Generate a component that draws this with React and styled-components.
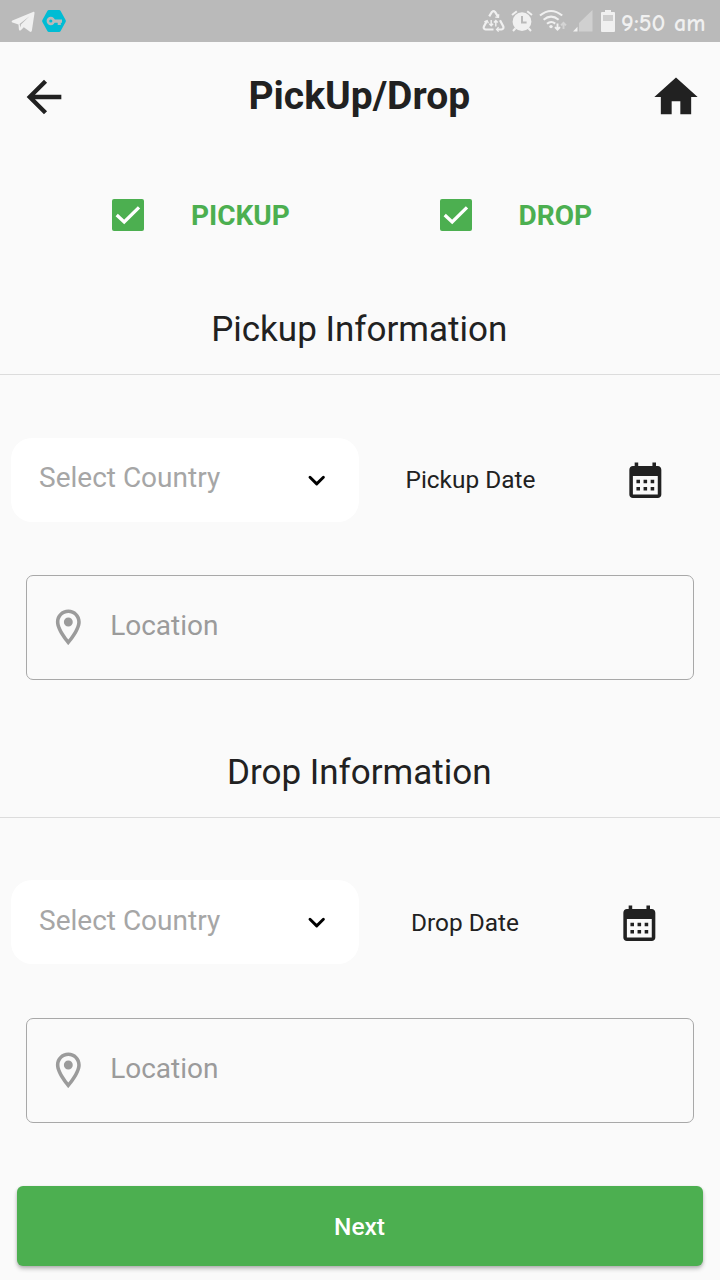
import React from 'react';
import styled, { createGlobalStyle } from 'styled-components';

const GlobalStyle = createGlobalStyle`
  * { box-sizing: border-box; }
  body { margin: 0; background: #fafafa; font-family: Roboto, sans-serif; color: #212121; }
`;

const Screen = styled.main`
  width: 720px;
  height: 1280px;
  overflow: hidden;
  display: flex;
  flex-direction: column;
  background: #fafafa;
`;

const StatusBar = styled.div`
  height: 42px;
  flex: none;
  display: flex;
  align-items: center;
  justify-content: space-between;
  background: #bababa;
  padding: 0 13px 0 11px;
`;

const StatusGroup = styled.div`
  display: flex;
  align-items: center;
  gap: ${(p) => p.$gap}px;
  svg { display: block; flex: none; }
`;

const Clock = styled.span`
  width: 86px;
  color: #f0f0f0;
  font: 700 24.2px/42px "Comic Neue", "Comic Sans MS", cursive, Lato, sans-serif;
  white-space: nowrap;
  padding-top: 3px;
`;

const Header = styled.header`
  height: 108px;
  flex: none;
  display: flex;
  align-items: center;
  justify-content: space-between;
  padding: 1px 18px 0 17.5px;
  svg { display: block; }
`;

const Title = styled.h1`
  margin: 0;
  padding: 0 1px 1px 0;
  font-size: 39px;
  font-weight: 700;
  line-height: 46px;
`;

const Options = styled.div`
  height: 130px;
  flex: none;
  display: flex;
  padding-left: 112px;
`;

const Option = styled.div`
  width: ${(p) => p.$width}px;
  height: 130px;
  display: flex;
  align-items: center;
  gap: 47px;
  color: #4caf50;
  font-size: 28px;
  font-weight: 700;
  svg { display: block; }
`;

const Section = styled.section`
  height: 443px;
  flex: none;
  display: flex;
  flex-direction: column;
`;

const SectionTitle = styled.h2`
  margin: 0;
  height: 95px;
  flex: none;
  display: flex;
  align-items: center;
  justify-content: center;
  border-bottom: 1px solid #dcdcdc;
  font-size: 35px;
  font-weight: 400;
  padding: 4px 1.5px 0 0;
`;

const FieldRow = styled.div`
  display: flex;
  align-items: center;
  margin: ${(p) => p.$top}px 0 ${(p) => 116 - p.$top}px;
  padding-left: 11px;
  height: 84px;
`;

const Select = styled.div`
  width: 348px;
  height: 84px;
  flex: none;
  display: flex;
  align-items: center;
  justify-content: space-between;
  padding: 0 32px 0 28px;
  border-radius: 21px;
  background: #fff;
  color: #a6a6a6;
  font-size: 28px;
  svg { display: block; }
`;

const SelectLabel = styled.span`
  padding-bottom: ${(p) => p.$lift}px;
`;

const DateField = styled.div`
  flex: 1;
  display: flex;
  align-items: center;
  justify-content: space-between;
  padding: ${(p) => p.$drop}px ${(p) => p.$right}px 0 ${(p) => p.$left}px;
  font-size: 24.4px;
  svg { display: block; }
`;

const DateLabel = styled.span`
  padding-bottom: 2px;
`;

const LocationField = styled.div`
  height: 104.6px;
  flex: none;
  margin: 0 26px 0 25.5px;
  display: flex;
  align-items: center;
  gap: 21px;
  padding: 0 0 0 20px;
  border: 1px solid #a8a8a8;
  border-radius: 7px;
  color: #9b9b9b;
  font-size: 28px;
  svg { display: block; }
`;

const LocationLabel = styled.span`
  padding-bottom: 3.6px;
`;

const NextButton = styled.button`
  height: 80.4px;
  flex: none;
  margin: 20px 17px 0;
  padding: 0 1px 0 0;
  border: 0;
  border-radius: 6px;
  background: #4caf50;
  color: #fff;
  font: 500 24.5px Roboto, sans-serif;
  box-shadow: 0 3px 4px rgba(0, 0, 0, 0.22), 0 1px 3px rgba(0, 0, 0, 0.12);
`;

const MaterialIcon = ({ size, d, color = '#212121' }) => (
  <svg width={size} height={size} viewBox="0 0 24 24" fill={color}><path d={d} /></svg>
);

const ARROW = 'M20 11H7.83l5.59-5.59L12 4l-8 8 8 8 1.41-1.41L7.83 13H20v-2z';
const HOME = 'M10 20v-6h4v6h5v-8h3L12 3 2 12h3v8z';
const CALENDAR = 'M19 4h-1V2h-2v2H8V2H6v2H5c-1.11 0-1.99.9-1.99 2L3 20c0 1.1.89 2 2 2h14c1.1 0 2-.9 2-2V6c0-1.1-.9-2-2-2zm0 16H5V9.5h14V20zM9 13.7H7v-2h2v2zm4 0h-2v-2h2v2zm4 0h-2v-2h2v2zm-8 4H7v-2h2v2zm4 0h-2v-2h2v2zm4 0h-2v-2h2v2z';
const PIN = 'M12 2C8.13 2 5 5.13 5 9c0 5.25 7 13 7 13s7-7.75 7-13c0-3.87-3.13-7-7-7zM7 9c0-2.76 2.24-5 5-5s5 2.24 5 5c0 2.88-2.88 7.19-5 9.88C9.92 16.21 7 11.85 7 9zM12 6.5a2.5 2.5 0 1 0 0 5 2.5 2.5 0 0 0 0-5z';

const Checkbox = () => (
  <svg width="32" height="32" viewBox="0 0 32 32">
    <rect width="32" height="32" rx="2" fill="#4caf50" />
    <path d="M4.7 16 12.2 23 27 8.4" fill="none" stroke="#fff" strokeWidth="3.3" />
  </svg>
);

const Chevron = () => (
  <svg width="20" height="16" viewBox="0 0 20 16">
    <path d="M3 5.3 9.7 11.9 16.4 5.3" fill="none" stroke="#000" strokeWidth="2.9" strokeLinecap="round" strokeLinejoin="round" />
  </svg>
);

const Telegram = () => (
  <svg width="25" height="22" viewBox="0 0 25 22" fill="#f0f0f0">
    <path d="M1.4 10.4 22 1.9c1.1-.5 1.7.1 1.5 1.3L20.9 20.6c-.3 1.4-1.2 1.6-2.2.9l-5.9-4.2-3 2.9c-.9.8-1.6.4-1.9-.6l-.4-5.1-6-1.9C.4 12.2.4 10.9 1.4 10.4zM8.6 13.9l.8 3.6.6-2.9 8.4-8.4z" />
  </svg>
);

const KeyBadge = () => (
  <svg width="26" height="24" viewBox="0 0 26 24">
    <path d="M7.8 1h10.4c.6 0 1 .3 1.3.8l5.1 9.2c.4.7.4 1.3 0 2l-5.1 9.2c-.3.5-.7.8-1.3.8H7.8c-.6 0-1-.3-1.3-.8L1.4 13c-.4-.7-.4-1.3 0-2l5.1-9.2c.3-.5.7-.8 1.3-.8z" fill="#00bcd4" />
    <circle cx="9.8" cy="12" r="2.9" fill="none" stroke="#bababa" strokeWidth="2.6" />
    <path d="M13 10.5h8v3.2h-1.2v2.2h-3.1v-2.2H13z" fill="#bababa" />
  </svg>
);

const Recycle = () => (
  <svg width="24" height="24" viewBox="0 0 24 24" fill="none" stroke="#f0f0f0" strokeWidth="2.2">
    <path d="M8.2 7.4 10.9 3q1.6-1.6 3.2 0l3 4.8M19 11.2l3.3 6.3q.6 2.6-1.8 3h-4.3M12.5 20.5H4.7q-2.6-.5-1.8-3l3-5.6" />
    <path d="m17.7 5.2-.2 3.2-3.2-.3M17.6 18.2l-2 2.3 2 2.1M3.3 12.8l2.9-1.2 1.2 2.6" strokeWidth="1.3" />
    <path d="M10.2 11v5.8m-1.9-2 1.9 2 1.9-2M14.8 17.6v-6m-1.9 2 1.9-2 1.9 2" strokeWidth="1.4" />
  </svg>
);

const Alarm = () => (
  <svg width="22" height="22" viewBox="0 0 22 22">
    <circle cx="11" cy="11.7" r="9.4" fill="#f0f0f0" />
    <path d="M1 5 5.8 1.2M21 5l-4.8-3.8M4.5 18.3 2 21m15.5-2.7L20 21" stroke="#f0f0f0" strokeWidth="2" />
    <path d="M11 6v6.4h4.6" fill="none" stroke="#bababa" strokeWidth="2" />
  </svg>
);

const Wifi = () => (
  <svg width="28" height="24" viewBox="0 0 28 24" fill="none" stroke="#f0f0f0" strokeWidth="2.1">
    <path d="M1 6.5q11-9 22.2 0M4.6 10.7q7.5-6 15 0M8 14.8q4.1-3.5 8.2-.2" />
    <circle cx="12" cy="17.6" r="1.7" fill="#f0f0f0" stroke="none" />
    <path d="M18.5 14.5v6m-2.5-2.4 2.5 2.6 2.5-2.6" strokeWidth="1.9" />
    <path d="M24.5 20v-6m-2.5 2.4 2.5-2.6 2.5 2.6" stroke="#d4d4d4" strokeWidth="1.9" />
  </svg>
);

const Signal = () => (
  <svg width="22" height="22" viewBox="0 0 22 22">
    <path d="M19.5 0v21.5H6V13z" fill="#d0d0d0" />
    <path d="M4.5 16.8v4.7H0z" fill="#f0f0f0" />
  </svg>
);

const Battery = () => (
  <svg width="14" height="22" viewBox="0 0 14 22">
    <path d="M4 0h6v2h3q1 0 1 1v18q0 1-1 1H1q-1 0-1-1V3q0-1 1-1h3z" fill="#f0f0f0" />
    <path d="M2 5h10v6H2z" fill="#cecece" />
  </svg>
);

const InfoSection = ({ kind, top, left, right, drop, lift }) => (
  <Section>
    <SectionTitle>{kind} Information</SectionTitle>
    <FieldRow $top={top}>
      <Select><SelectLabel $lift={lift}>Select Country</SelectLabel><Chevron /></Select>
      <DateField $left={left} $right={right} $drop={drop}>
        <DateLabel>{kind} Date</DateLabel>
        <MaterialIcon size={42.67} d={CALENDAR} />
      </DateField>
    </FieldRow>
    <LocationField>
      <MaterialIcon size={42.67} d={PIN} color="#9b9b9b" />
      <LocationLabel>Location</LocationLabel>
    </LocationField>
  </Section>
);

export default function App() {
  return (
    <>
      <GlobalStyle />
      <Screen>
        <StatusBar>
          <StatusGroup $gap={5}><Telegram /><KeyBadge /></StatusGroup>
          <StatusGroup $gap={6}>
            <Recycle /><Alarm /><Wifi /><Signal /><Battery />
            <Clock>9:50 am</Clock>
          </StatusGroup>
        </StatusBar>
        <Header>
          <MaterialIcon size={52} d={ARROW} />
          <Title>PickUp/Drop</Title>
          <MaterialIcon size={52} d={HOME} />
        </Header>
        <Options>
          <Option $width={327.5}><Checkbox /><span>PICKUP</span></Option>
          <Option $width={200}><Checkbox /><span>DROP</span></Option>
        </Options>
        <InfoSection kind="Pickup" top={63} left={46.5} right={53.5} drop={0} lift={5} />
        <InfoSection kind="Drop" top={62} left={52} right={59.5} drop={2} lift={3} />
        <NextButton>Next</NextButton>
      </Screen>
    </>
  );
}
